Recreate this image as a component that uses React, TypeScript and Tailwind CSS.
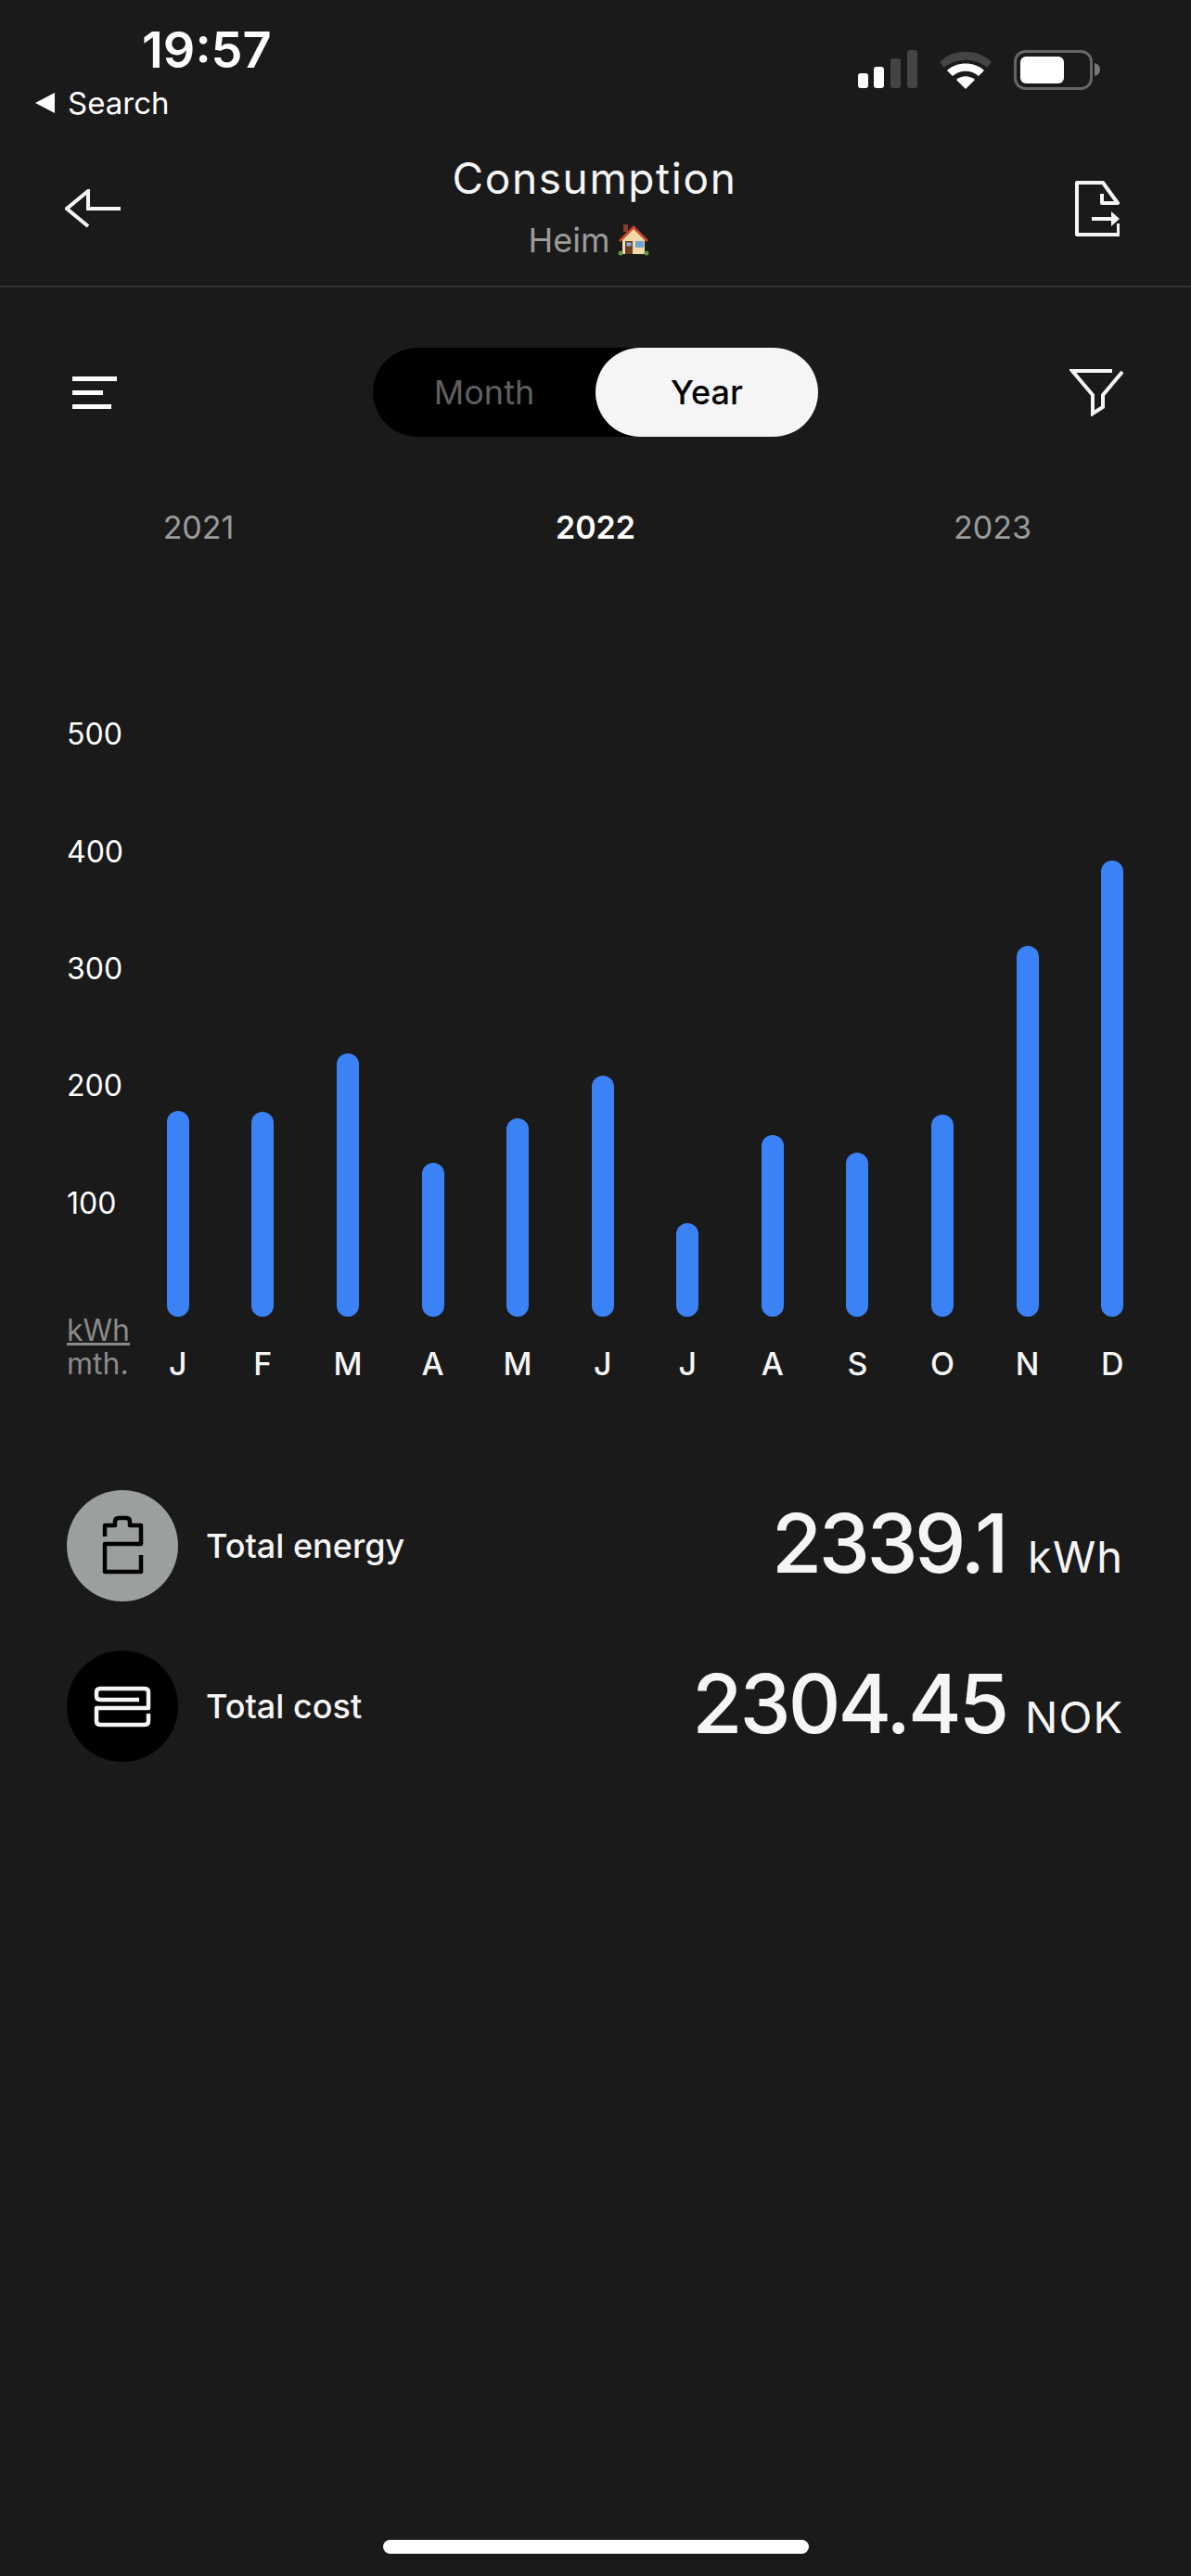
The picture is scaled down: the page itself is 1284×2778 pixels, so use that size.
const months = [
  { label: "J", top: 1198 },
  { label: "F", top: 1199 },
  { label: "M", top: 1136 },
  { label: "A", top: 1254 },
  { label: "M", top: 1206 },
  { label: "J", top: 1160 },
  { label: "J", top: 1319 },
  { label: "A", top: 1224 },
  { label: "S", top: 1243 },
  { label: "O", top: 1202 },
  { label: "N", top: 1020 },
  { label: "D", top: 928 },
];

const axis = ["500", "400", "300", "200", "100"];
const barBottom = 1420;

function StatusIcons() {
  return (
    <svg width="262" height="44" viewBox="0 0 262 44" fill="none">
      <rect x="0" y="25" width="11" height="16" rx="3" fill="#fff" />
      <rect x="17" y="18" width="11" height="23" rx="3" fill="#fff" />
      <rect x="35" y="9" width="11" height="32" rx="3" fill="#444" />
      <rect x="53" y="0" width="11" height="41" rx="3" fill="#444" />
      <path d="M88 13 C102 -2 130 -2 144 13 L139 19 C127 8 105 8 93 19 Z" fill="#444" />
      <path d="M96 22 C106 12 126 12 136 22 L130 28 C122 21 110 21 102 28 Z" fill="#fff" />
      <path d="M106 32 C112 27 120 27 126 32 L116 42 Z" fill="#fff" />
      <rect x="169.5" y="1.5" width="82" height="40" rx="11" stroke="#666" strokeWidth="3" />
      <rect x="175" y="7" width="47" height="29" rx="6" fill="#fff" />
      <path d="M255 14 C259 15 261 18 261 21 C261 24 259 27 255 28 Z" fill="#777" />
    </svg>
  );
}

function HouseEmoji() {
  return (
    <svg width="34" height="34" viewBox="0 0 34 34" className="ml-[9px]">
      <rect x="6" y="0" width="5" height="8" fill="#8a3b2c" />
      <path d="M5 15 L17 3 L29 15 V32 H5 Z" fill="#f3d9a8" />
      <path d="M1 17 L17 1 L33 17 L31 19 L17 5 L3 19 Z" fill="#c8442f" />
      <rect x="8" y="18" width="8" height="14" fill="#6e3a26" />
      <rect x="9.5" y="19.5" width="5" height="4" fill="#7fb2dc" />
      <rect x="19" y="18" width="9" height="7" fill="#6ea3d6" />
      <circle cx="3" cy="31" r="2.5" fill="#5a9a3c" />
      <circle cx="31" cy="31" r="2.5" fill="#5a9a3c" />
    </svg>
  );
}

export default function App() {
  return (
    <div className="w-[1284px] h-[2778px] bg-[#1a1a1a] text-[#f5f5f5] font-['Inter',sans-serif] flex flex-col">
      {/* status bar */}
      <div className="h-[135px] flex justify-between">
        <div>
          <div className="pl-[153px] pt-[24px] text-[54px] leading-[60px] font-semibold text-white">19:57</div>
          <div className="pl-[38px] mt-[7px] flex items-center gap-[13px] text-white">
            <svg width="22" height="22" viewBox="0 0 22 22">
              <path d="M0 11 L21 0 V22 Z" fill="#fff" />
            </svg>
            <span className="text-[33px] leading-[40px]">Search</span>
          </div>
        </div>
        <div className="pt-[54px] pr-[97px]">
          <StatusIcons />
        </div>
      </div>

      {/* header */}
      <div className="h-[175px] border-b-2 border-[#333] grid grid-cols-[1fr_auto_1fr] pl-[70px] pr-[77px]">
        <svg width="60" height="42" viewBox="0 0 60 42" fill="none" className="mt-[69px]" stroke="#f5f5f5" strokeWidth="4">
          <path d="M25 40 L2 21 L25 2 V21 H60" />
        </svg>
        <div className="flex flex-col items-center pt-[29px] pl-[5px]">
          <div className="text-[46px] leading-[56px] tracking-[1.6px]">Consumption</div>
          <div className="mt-[17px] pr-[12px] flex items-center text-[36px] leading-[44px] text-[#9a9c9c]">
            Heim
            <HouseEmoji />
          </div>
        </div>
        <svg width="48" height="60" viewBox="0 0 48 60" fill="none" className="mt-[60px] justify-self-end" stroke="#f5f5f5" strokeWidth="4" strokeLinejoin="round">
          <path d="M47 46 V58 H2 V2 H30 L46 24 H29 V14" />
          <path d="M18 41 H42" />
          <path d="M39 33 L48 41 L39 49 Z" fill="#f5f5f5" stroke="none" />
        </svg>
      </div>

      {/* month/year switch */}
      <div className="mt-[65px] h-[96px] flex justify-between items-center pl-[78px] pr-[72px]">
        <div className="flex flex-col gap-[10px]">
          <div className="w-[48px] h-[5px] bg-white" />
          <div className="w-[33px] h-[5px] bg-white" />
          <div className="w-[42px] h-[5px] bg-white" />
        </div>
        <div className="w-[480px] h-[96px] bg-black rounded-full flex ml-[5px]">
          <div className="w-[240px] flex items-center justify-center text-[36px] text-[#5f6060]">Month</div>
          <div className="w-[240px] flex items-center justify-center text-[36px] font-medium text-black bg-[#f5f5f5] rounded-full">Year</div>
        </div>
        <svg width="59" height="51" viewBox="0 0 59 51" fill="none" stroke="#f5f5f5" strokeWidth="4">
          <path d="M46 2 H3 L25 28 V48 L36 41 V28 L57 3" />
        </svg>
      </div>

      {/* years */}
      <div className="mt-[76px] grid grid-cols-3 text-center text-[34px] leading-[44px] text-[#9a9c9c]">
        <span>2021</span>
        <span className="font-semibold text-white">2022</span>
        <span>2023</span>
      </div>

      {/* chart */}
      <div className="mt-[136px] pl-[72px] pr-[39px]">
        <div className="flex h-[726px]">
          <div className="w-[74px] pt-[2px] flex flex-col text-[32px] text-white">
            {axis.map((v) => (
              <div key={v} className="h-[126.5px] flex items-center">{v}</div>
            ))}
            <div className="mt-[55px] text-[#8a8a8a] underline leading-[37px]">kWh</div>
          </div>
          <div className="flex-1 grid grid-cols-12 items-end pb-[33px]">
            {months.map((m, i) => (
              <div key={i} className="flex justify-center">
                <div className="w-[24px] rounded-full bg-[#3b82f6]" style={{ height: barBottom - m.top }} />
              </div>
            ))}
          </div>
        </div>
        <div className="flex h-[38px] items-center pb-[3px]">
          <div className="w-[74px] text-[32px] text-[#8a8a8a]">mth.</div>
          <div className="flex-1 grid grid-cols-12 text-center text-[34px] font-medium text-[#f5f5f5]">
            {months.map((m, i) => (
              <span key={i}>{m.label}</span>
            ))}
          </div>
        </div>
      </div>

      {/* totals */}
      <div className="mt-[116px] pl-[72px] pr-[73px] flex flex-col gap-[53px]">
        <div className="h-[120px] flex items-center justify-between">
          <div className="flex items-center gap-[30px]">
            <div className="w-[120px] h-[120px] rounded-full bg-[#9c9f9f]">
              <svg width="120" height="120" viewBox="0 0 120 120" fill="none" stroke="#000" strokeWidth="4.5" strokeLinejoin="round">
                <path d="M41 50 V38 H52 V34 Q52 30 56 30 H64 Q68 30 68 34 V38 H80 V58 H41 V88 H80 V70" />
              </svg>
            </div>
            <span className="text-[36px] font-medium">Total energy</span>
          </div>
          <div className="flex items-baseline gap-[24px] mt-[-6px]">
            <span className="text-[88px] leading-[100px] font-medium tracking-[-3.5px]">2339.1</span>
            <span className="text-[47px] tracking-[1px]">kWh</span>
          </div>
        </div>
        <div className="h-[120px] flex items-center justify-between">
          <div className="flex items-center gap-[30px]">
            <div className="w-[120px] h-[120px] rounded-full bg-black">
              <svg width="120" height="120" viewBox="0 0 120 120" fill="none" stroke="#f5f5f5" strokeWidth="4.5" strokeLinejoin="round">
                <path d="M78 53 H36 Q32 53 32 49 V45 Q32 41 36 41 H84 Q88 41 88 45 V62 H32 V76 Q32 80 36 80 H84 Q88 80 88 76 V68" />
              </svg>
            </div>
            <span className="text-[36px] font-medium">Total cost</span>
          </div>
          <div className="flex items-baseline gap-[20px] mt-[-6px]">
            <span className="text-[88px] leading-[100px] font-medium tracking-[-3px]">2304.45</span>
            <span className="text-[47px] tracking-[1px]">NOK</span>
          </div>
        </div>
      </div>

      {/* home indicator */}
      <div className="mt-auto pb-[24px] flex justify-center">
        <div className="w-[459px] h-[15px] rounded-full bg-white" />
      </div>
    </div>
  );
}
